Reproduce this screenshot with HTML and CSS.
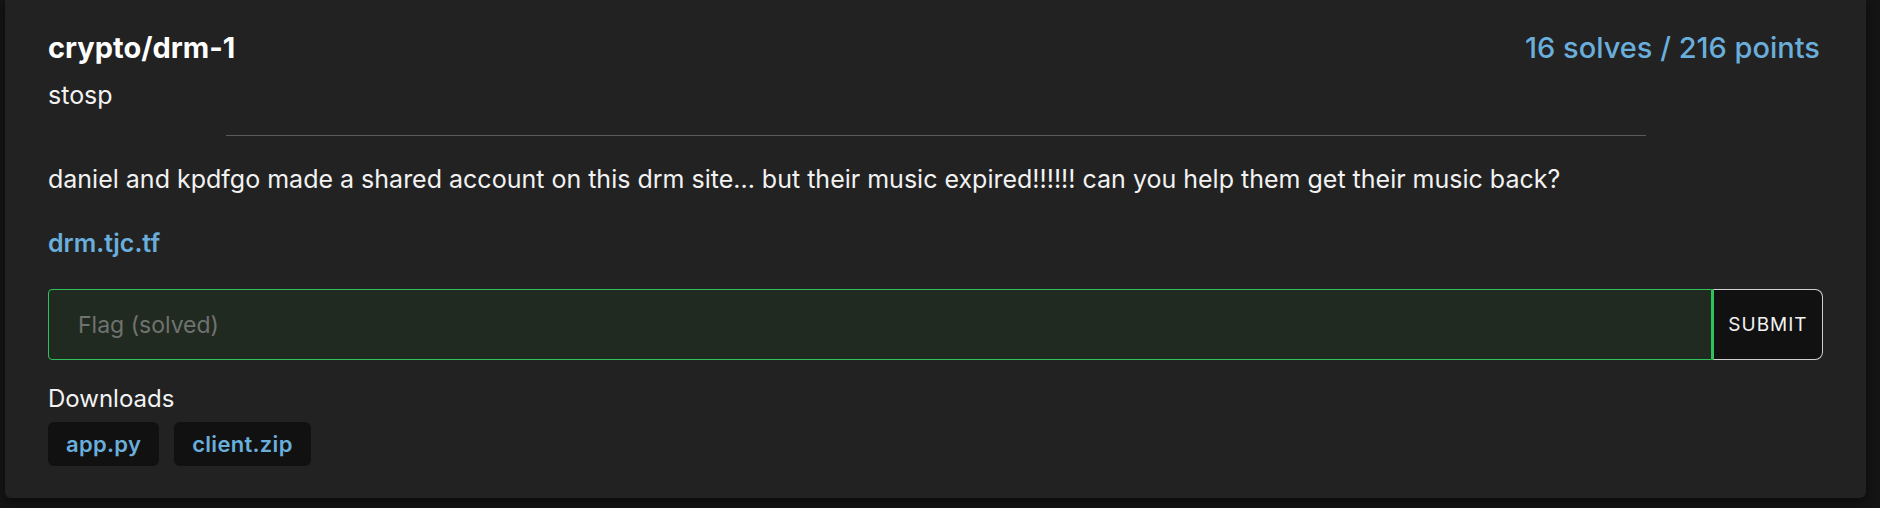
FILE: index.html
```html
<!DOCTYPE html>
<html lang="en">
<head>
<meta charset="utf-8">
<title>crypto/drm-1</title>
<link rel="stylesheet" href="styles.css">
</head>
<body>
<div class="card">
  <div class="card-head">
    <h2 class="title">crypto/drm-1</h2>
    <div class="score">16 solves / 216 points</div>
  </div>
  <div class="author">stosp</div>
  <hr class="divider">
  <p class="desc">daniel and kpdfgo made a shared account on this drm site... but their music expired!!!!!! can you help them get their music back?</p>
  <p class="link-row"><a class="link" href="#">drm.tjc.tf</a></p>
  <form class="flag-form">
    <input class="flag-input" type="text" placeholder="Flag (solved)">
    <button class="submit" type="button">Submit</button>
  </form>
  <div class="downloads-label">Downloads</div>
  <div class="downloads">
    <a class="chip" href="#">app.py</a>
    <a class="chip" href="#">client.zip</a>
  </div>
</div>
</body>
</html>
```

FILE: styles.css
```css
* { box-sizing: border-box; }

html, body {
  margin: 0;
  background: #141414;
  font-family: Inter, "Noto Sans", "Liberation Sans", sans-serif;
  color: #f2f2f2;
}

.card {
  margin: 0 14px 10px 5px;
  background: #222222;
  border-radius: 0 0 6px 6px;
  box-shadow: 0 4px 10px rgba(0, 0, 0, 0.45);
  padding: 31px 43px 32px 43px;
}

.card-head {
  display: flex;
  justify-content: space-between;
  align-items: baseline;
  padding-right: 3px;
}

.title {
  margin: 0;
  font-size: 29px;
  line-height: 34px;
  font-weight: 700;
  color: #ffffff;
}

.score {
  font-size: 29px;
  line-height: 34px;
  font-weight: 500;
  color: #6aaedc;
}

.author {
  margin-top: 15px;
  font-size: 25px;
  line-height: 30px;
}

.divider {
  width: 80%;
  margin: 25px auto 0;
  border: 0;
  height: 1px;
  background: #5a5a5a;
}

.desc {
  margin: 28px 0 0;
  font-size: 25px;
  line-height: 30px;
}

.link-row {
  margin: 34px 0 0;
  font-size: 25px;
  line-height: 30px;
}

.link {
  color: #6aaedc;
  font-weight: 600;
  text-decoration: none;
}

.flag-form {
  display: flex;
  margin-top: 31px;
  height: 71px;
}

.flag-input {
  flex: 1;
  min-width: 0;
  background: #212a21;
  border: 1px solid #2fc25a;
  border-radius: 4px 0 0 4px;
  padding: 0 29px;
  font-family: inherit;
  font-size: 23px;
  color: #f2f2f2;
  outline: none;
}

.flag-input::placeholder {
  color: #6f726f;
}

.submit {
  width: 111px;
  background: #111111;
  border: 1px solid #cfcfcf;
  border-left: 2px solid #2fc25a;
  border-radius: 0 8px 8px 0;
  color: #f2f2f2;
  font-family: inherit;
  font-size: 19px;
  font-weight: 400;
  letter-spacing: 1px;
  text-transform: uppercase;
  padding: 0;
}

.downloads-label {
  margin-top: 24px;
  font-size: 24px;
  line-height: 30px;
}

.downloads {
  display: flex;
  gap: 15px;
  margin-top: 8px;
}

.chip {
  display: flex;
  align-items: center;
  height: 44px;
  padding: 0 18px;
  background: #111111;
  border-radius: 6px;
  color: #6aaedc;
  font-size: 22px;
  font-weight: 600;
  text-decoration: none;
  letter-spacing: 0.3px;
}
```
